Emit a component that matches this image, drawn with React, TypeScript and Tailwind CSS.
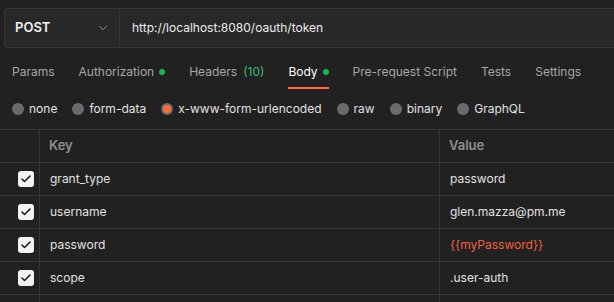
import { ChevronDown, Check } from "lucide-react";

const TABS: { label: string; dot?: boolean; count?: string; active?: boolean }[] = [
  { label: "Params" },
  { label: "Authorization", dot: true },
  { label: "Headers", count: "(10)" },
  { label: "Body", dot: true, active: true },
  { label: "Pre-request Script" },
  { label: "Tests" },
  { label: "Settings" },
];

const BODY_TYPES = ["none", "form-data", "x-www-form-urlencoded", "raw", "binary", "GraphQL"];
const SELECTED = "x-www-form-urlencoded";

const ROWS: { key: string; value: string; variable?: boolean }[] = [
  { key: "grant_type", value: "password" },
  { key: "username", value: "glen.mazza@pm.me" },
  { key: "password", value: "{{myPassword}}", variable: true },
  { key: "scope", value: ".user-auth" },
];

function CheckBox() {
  return (
    <span className="flex h-4 w-4 items-center justify-center rounded-[3px] bg-[#f2f2f2]">
      <Check size={12} strokeWidth={3.2} className="text-[#1c1c1c]" />
    </span>
  );
}

export default function App() {
  return (
    <div className="h-[302px] w-[614px] overflow-hidden whitespace-nowrap bg-[#212121] font-['Inter','Noto_Sans',sans-serif] text-[12px]">
      {/* request bar */}
      <div className="pl-1 pt-2">
        <div className="flex h-[40px] w-[640px] rounded-[4px] border border-[#363636] bg-[#282828]">
          <div className="flex w-[115px] items-center justify-between border-r border-[#363636] pl-[10px] pr-[9px]">
            <span className="text-[13px] font-semibold text-[#f0f0f0]">POST</span>
            <ChevronDown size={14} strokeWidth={1.5} className="text-[#a0a0a0]" />
          </div>
          <div className="flex items-center pl-[12px] text-[#ececec]">
            http://localhost:8080/oauth/token
          </div>
        </div>
      </div>

      {/* tabs */}
      <div className="mt-[15px] flex h-[26px]">
        {TABS.map((t) => (
          <div key={t.label} className="flex px-3">
            <div
              className={`flex h-full items-start gap-[5px] border-b-2 ${
                t.active ? "border-[#ff6c37] text-white" : "border-transparent text-[#a6a6a6]"
              }`}
            >
              <span>
                {t.label}
                {t.count && <span className="ml-[6px] text-[#3dba73]">{t.count}</span>}
              </span>
              {t.dot && <span className="mt-[6px] h-[6px] w-[6px] rounded-full bg-[#0cbb52]" />}
            </div>
          </div>
        ))}
      </div>

      {/* body types */}
      <div className="flex h-[40px] items-center gap-[15px] pl-3">
        {BODY_TYPES.map((b) => (
          <div key={b} className="flex items-center gap-[5px] text-[#e2e2e2]">
            <span className="flex h-3 w-3 items-center justify-center rounded-full bg-[#6b6b6b]">
              {b === SELECTED && <span className="h-2 w-2 rounded-full bg-[#ff6c37]" />}
            </span>
            {b}
          </div>
        ))}
      </div>

      {/* table */}
      <div className="border-t border-[#363636]">
        <div className="flex h-[33px] border-b border-[#363636]">
          <div className="w-[40px] border-r border-[#363636]" />
          <div className="flex w-[400px] items-center border-r border-[#363636] pl-[9px] text-[13px] font-semibold text-[#8f8f8f]">
            Key
          </div>
          <div className="flex flex-1 items-center pl-[9px] text-[13px] font-semibold text-[#8f8f8f]">
            Value
          </div>
        </div>
        {[...ROWS, null].map((r, i) => (
          <div key={i} className="flex h-[33px] border-b border-[#363636]">
            <div className="flex w-[40px] items-center justify-end border-r border-[#363636] pr-[5px]">
              <CheckBox />
            </div>
            <div className="flex w-[400px] items-center border-r border-[#363636] pl-[10px] text-[#e2e2e2]">
              {r?.key}
            </div>
            <div
              className={`flex flex-1 items-center pl-[10px] ${
                r?.variable ? "text-[#f4603e]" : "text-[#e2e2e2]"
              }`}
            >
              {r?.value}
            </div>
          </div>
        ))}
      </div>
    </div>
  );
}
